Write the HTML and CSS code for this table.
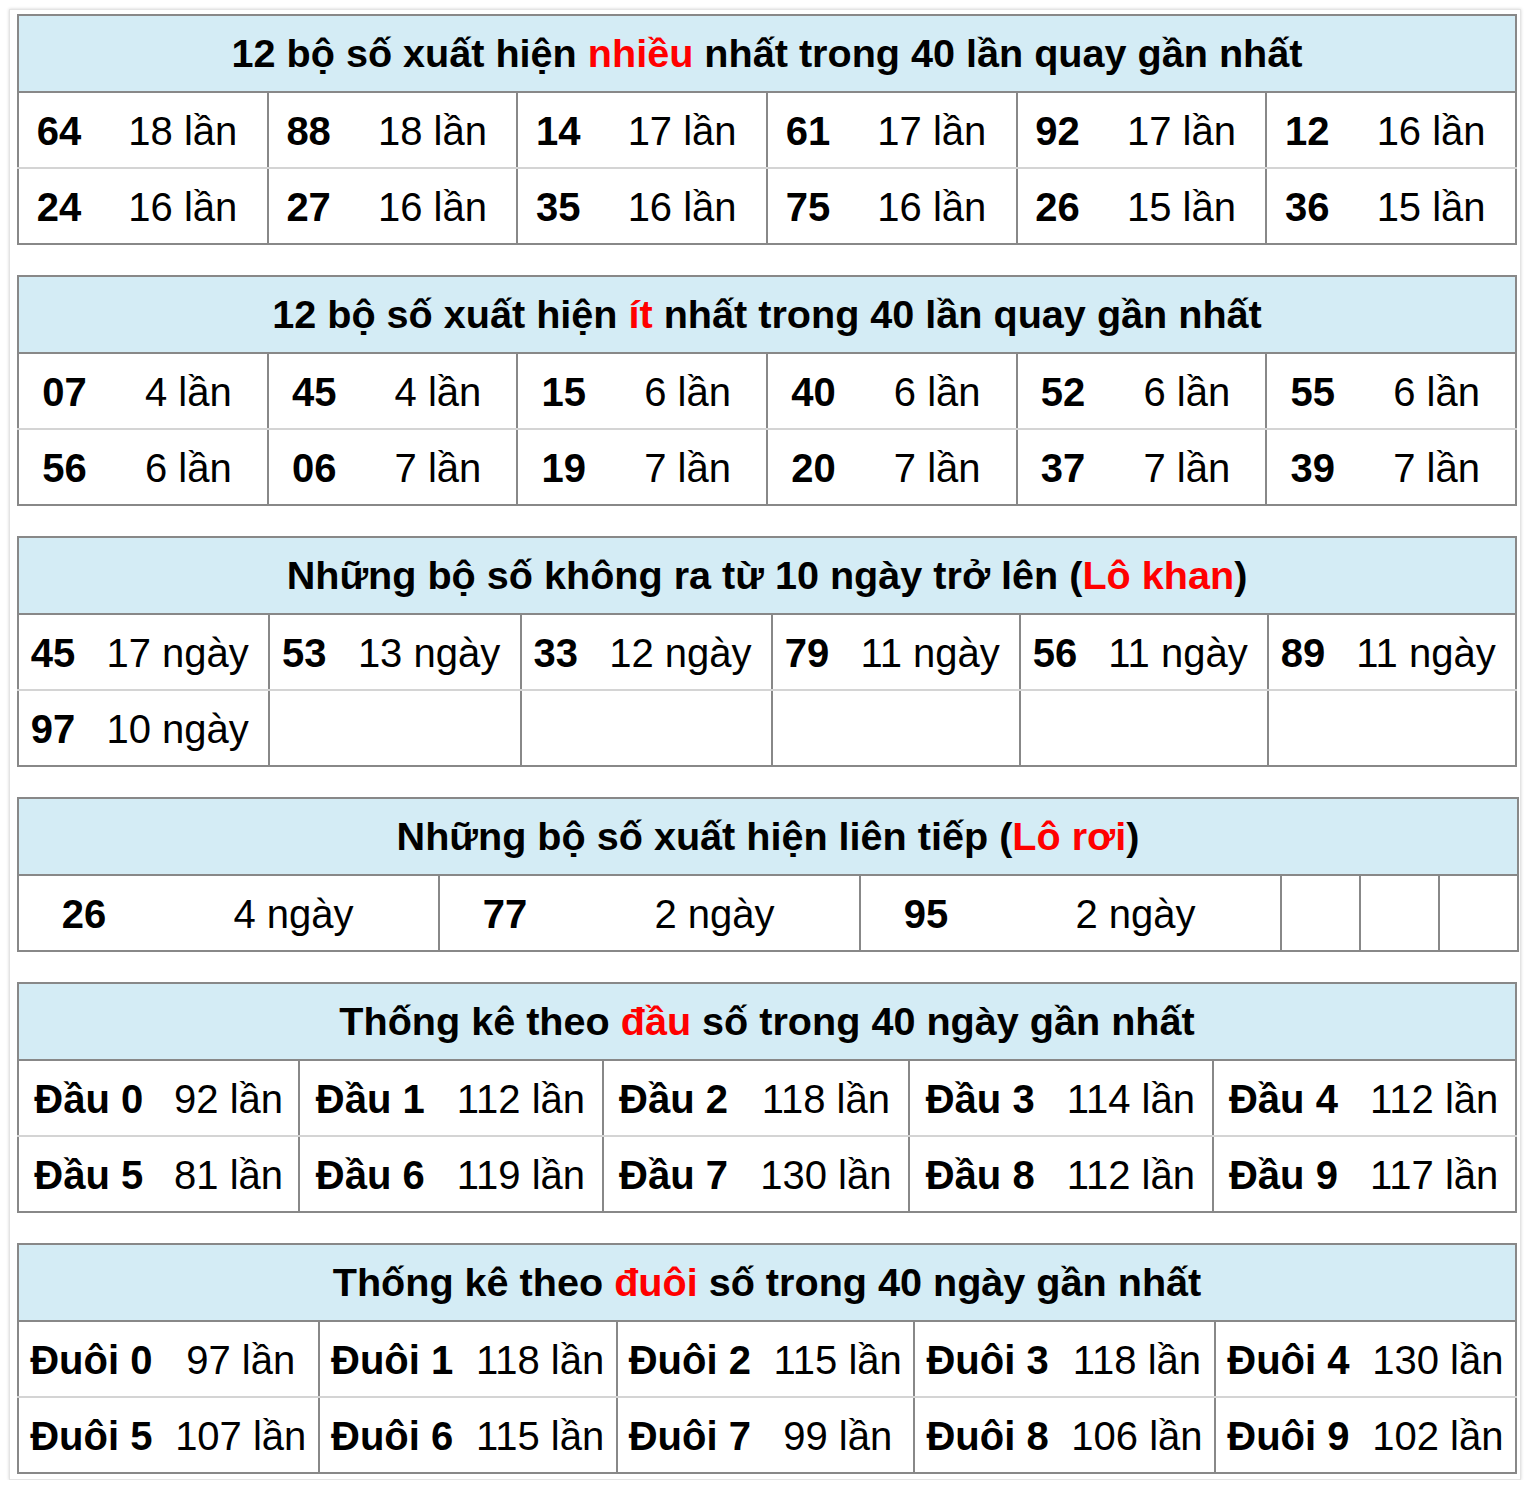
FILE: index.html
```html
<!DOCTYPE html>
<html lang="vi">
<head>
<meta charset="utf-8">
<title>Thống kê</title>
<link rel="stylesheet" href="styles.css">
</head>
<body>
<div class="wrap">

<table class="stat">
  <tr><th colspan="12">12 bộ số xuất hiện <span class="red">nhiều</span> nhất trong 40 lần quay gần nhất</th></tr>
  <tr>
    <td class="n">64</td><td class="c">18 lần</td>
    <td class="n">88</td><td class="c">18 lần</td>
    <td class="n">14</td><td class="c">17 lần</td>
    <td class="n">61</td><td class="c">17 lần</td>
    <td class="n">92</td><td class="c">17 lần</td>
    <td class="n">12</td><td class="c">16 lần</td>
  </tr>
  <tr>
    <td class="n">24</td><td class="c">16 lần</td>
    <td class="n">27</td><td class="c">16 lần</td>
    <td class="n">35</td><td class="c">16 lần</td>
    <td class="n">75</td><td class="c">16 lần</td>
    <td class="n">26</td><td class="c">15 lần</td>
    <td class="n">36</td><td class="c">15 lần</td>
  </tr>
</table>

<table class="stat">
  <tr><th colspan="12">12 bộ số xuất hiện <span class="red">ít</span> nhất trong 40 lần quay gần nhất</th></tr>
  <tr>
    <td class="n">07</td><td class="c">4 lần</td>
    <td class="n">45</td><td class="c">4 lần</td>
    <td class="n">15</td><td class="c">6 lần</td>
    <td class="n">40</td><td class="c">6 lần</td>
    <td class="n">52</td><td class="c">6 lần</td>
    <td class="n">55</td><td class="c">6 lần</td>
  </tr>
  <tr>
    <td class="n">56</td><td class="c">6 lần</td>
    <td class="n">06</td><td class="c">7 lần</td>
    <td class="n">19</td><td class="c">7 lần</td>
    <td class="n">20</td><td class="c">7 lần</td>
    <td class="n">37</td><td class="c">7 lần</td>
    <td class="n">39</td><td class="c">7 lần</td>
  </tr>
</table>

<table class="stat">
  <tr><th colspan="12">Những bộ số không ra từ 10 ngày trở lên (<span class="red">Lô khan</span>)</th></tr>
  <tr>
    <td class="n">45</td><td class="c">17 ngày</td>
    <td class="n">53</td><td class="c">13 ngày</td>
    <td class="n">33</td><td class="c">12 ngày</td>
    <td class="n">79</td><td class="c">11 ngày</td>
    <td class="n">56</td><td class="c">11 ngày</td>
    <td class="n">89</td><td class="c">11 ngày</td>
  </tr>
  <tr>
    <td class="n">97</td><td class="c">10 ngày</td>
    <td class="n"></td><td class="c"></td>
    <td class="n"></td><td class="c"></td>
    <td class="n"></td><td class="c"></td>
    <td class="n"></td><td class="c"></td>
    <td class="n"></td><td class="c"></td>
  </tr>
</table>

<table class="stat fixed">
  <colgroup>
    <col class="rn"><col class="rc">
    <col class="rn"><col class="rc">
    <col class="rn"><col class="rc">
    <col class="re"><col class="re"><col class="re">
  </colgroup>
  <tr><th colspan="9">Những bộ số xuất hiện liên tiếp (<span class="red">Lô rơi</span>)</th></tr>
  <tr>
    <td class="n">26</td><td class="c">4 ngày</td>
    <td class="n">77</td><td class="c">2 ngày</td>
    <td class="n">95</td><td class="c">2 ngày</td>
    <td class="n"></td>
    <td class="n"></td>
    <td class="n"></td>
  </tr>
</table>

<table class="stat">
  <tr><th colspan="10">Thống kê theo <span class="red">đầu</span> số trong 40 ngày gần nhất</th></tr>
  <tr>
    <td class="n">Đầu 0</td><td class="c">92 lần</td>
    <td class="n">Đầu 1</td><td class="c">112 lần</td>
    <td class="n">Đầu 2</td><td class="c">118 lần</td>
    <td class="n">Đầu 3</td><td class="c">114 lần</td>
    <td class="n">Đầu 4</td><td class="c">112 lần</td>
  </tr>
  <tr>
    <td class="n">Đầu 5</td><td class="c">81 lần</td>
    <td class="n">Đầu 6</td><td class="c">119 lần</td>
    <td class="n">Đầu 7</td><td class="c">130 lần</td>
    <td class="n">Đầu 8</td><td class="c">112 lần</td>
    <td class="n">Đầu 9</td><td class="c">117 lần</td>
  </tr>
</table>

<table class="stat last">
  <tr><th colspan="10">Thống kê theo <span class="red">đuôi</span> số trong 40 ngày gần nhất</th></tr>
  <tr>
    <td class="n">Đuôi 0</td><td class="c">97 lần</td>
    <td class="n">Đuôi 1</td><td class="c">118 lần</td>
    <td class="n">Đuôi 2</td><td class="c">115 lần</td>
    <td class="n">Đuôi 3</td><td class="c">118 lần</td>
    <td class="n">Đuôi 4</td><td class="c">130 lần</td>
  </tr>
  <tr>
    <td class="n">Đuôi 5</td><td class="c">107 lần</td>
    <td class="n">Đuôi 6</td><td class="c">115 lần</td>
    <td class="n">Đuôi 7</td><td class="c">99 lần</td>
    <td class="n">Đuôi 8</td><td class="c">106 lần</td>
    <td class="n">Đuôi 9</td><td class="c">102 lần</td>
  </tr>
</table>

</div>
</body>
</html>
```

FILE: styles.css
```css
html, body {
  margin: 0;
  padding: 0;
  background: #ffffff;
}

body {
  font-family: "Liberation Sans", Arial, Helvetica, sans-serif;
  color: #000;
}

.wrap {
  margin: 9px 0 0 9px;
  width: 1512px;
  box-sizing: border-box;
  border: 1px solid #e4e4e4;
  box-shadow: 0 0 3px rgba(0, 0, 0, 0.18);
  padding: 4px 3px 5px 7px;
  background: #fff;
}

.stat {
  width: 1500px;
  border-collapse: collapse;
  border: 2px solid #888;
  margin: 0 0 30px 0;
  font-size: 40px;
}

.stat.last {
  margin-bottom: 0;
}

.stat.fixed {
  table-layout: fixed;
}

.rn { width: 131px; }
.rc { width: 290px; }
.re { width: 79px; }

.stat th {
  background: #d4ecf5;
  font-weight: bold;
  font-size: 39.6px;
  text-align: center;
  padding: 14px 7px 15px;
  line-height: 46px;
  border-bottom: 2px solid #888;
}

.stat td {
  padding: 15px 7px 13px;
  line-height: 46px;
  height: 46px;
  text-align: center;
  white-space: nowrap;
  border-bottom: 2px solid #d4d4d4;
}

.stat tr:last-child td {
  border-bottom: 2px solid #888;
}

.stat td.n {
  font-weight: bold;
  border-left: 2px solid #888;
}

.red {
  color: #ff0000;
}
```
